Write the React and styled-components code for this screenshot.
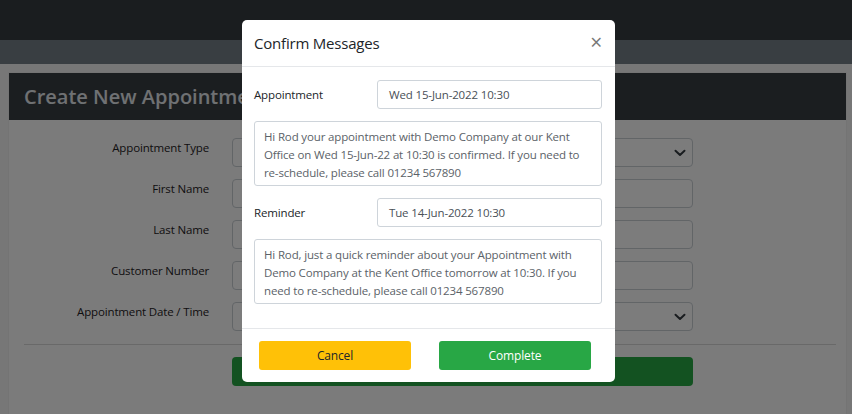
import React from 'react';
import styled, { createGlobalStyle } from 'styled-components';

const Global = createGlobalStyle`
	html, body {
		margin:0;
		padding:0;
		width:852px;
		height:414px;
		overflow:hidden;
		background:#f2f2f2;
		font-family:"Open Sans", "Noto Sans", sans-serif;
		font-size:11.5px;
		letter-spacing:-0.15px;
		color:#212529;
	}
	* { box-sizing:border-box; }
`;

const Page = styled.div`
	height:414px;
	display:flex;
	flex-flow:column nowrap;
`;

const Nav = styled.nav`
	height:40px;
	background:#363b41;
`;

const SubNav = styled.div`
	height:24px;
	background:#757e87;
`;

const Main = styled.main`
	flex:1;
	padding:8px 5px 0 8px;
	display:flex;
`;

const Card = styled.section`
	flex:1;
	background:#fbfbfb;
	border:1px solid #ececec;
	border-bottom:none;
	display:flex;
	flex-flow:column nowrap;
`;

const CardHeader = styled.header`
	height:47px;
	background:#383d42;
	padding:0 15px;
	display:flex;
	align-items:center;
`;

const CardTitle = styled.h2`
	margin:0;
	font-size:20px;
	font-weight:600;
	letter-spacing:0;
	color:#e2e6ea;
`;

const CardBody = styled.div`
	padding:18px 10px 0 15px;
	display:flex;
	flex-flow:column nowrap;
	gap:12px;
`;

const FormRow = styled.div`
	display:grid;
	grid-template-columns:185px 461px;
	column-gap:23px;
	align-items:start;
`;

const FormLabel = styled.label`
	text-align:right;
	color:#1f2225;
	line-height:16px;
	margin-top:2px;
`;

const Field = styled.div`
	height:29px;
	border:1px solid #c8ced3;
	border-radius:4px;
	background:#fdfdfd;
	display:flex;
	align-items:center;
	justify-content:flex-end;
	padding-right:4px;
`;

const Rule = styled.hr`
	margin:1px 0 0 0;
	border:none;
	border-top:1px solid #d6d6d6;
`;

const SubmitRow = styled.div`
	padding-left:208px;
`;

const Submit = styled.div`
	width:461px;
	height:29px;
	background:#28a745;
	border-radius:4px;
`;

const Backdrop = styled.div`
	position:fixed;
	inset:0;
	background:rgba(0,0,0,0.51);
`;

const Modal = styled.div`
	position:fixed;
	left:242px;
	top:20px;
	width:373px;
	height:362px;
	background:#fff;
	border-radius:5px;
	display:flex;
	flex-flow:column nowrap;
`;

const ModalHeader = styled.header`
	height:47px;
	border-bottom:1px solid #e5e7ea;
	padding:0 13px 0 12px;
	display:flex;
	align-items:center;
	justify-content:space-between;
`;

const ModalTitle = styled.h5`
	margin:0;
	font-size:15px;
	font-weight:400;
	letter-spacing:-0.2px;
	color:#212529;
`;

const Close = styled.span`
	font-size:21px;
	line-height:1;
	color:#777;
	margin-top:-2px;
`;

const ModalBody = styled.div`
	flex:1;
	padding:13px 13px 0 12px;
	display:flex;
	flex-flow:column nowrap;
`;

const PairRow = styled.div`
	display:grid;
	grid-template-columns:123px 1fr;
	align-items:center;
	margin-bottom:12px;
`;

const PairLabel = styled.span`
	color:#212529;
`;

const Input = styled.div`
	height:29px;
	border:1px solid #ced4da;
	border-radius:3px;
	padding:0 11px;
	display:flex;
	align-items:center;
	color:#495057;
`;

const Message = styled.div`
	height:65px;
	border:1px solid #ced4da;
	border-radius:3px;
	padding:6px 8px 0 9px;
	line-height:18px;
	color:#5b6268;
	margin-bottom:12px;
`;

const ModalFooter = styled.footer`
	height:54px;
	border-top:1px solid #e5e7ea;
	padding:12px 24px 0 17px;
	display:flex;
	justify-content:space-between;
	align-items:flex-start;
`;

const Btn = styled.button`
	width:152px;
	height:29px;
	border:none;
	border-radius:3px;
	font-family:inherit;
	font-size:12px;
	letter-spacing:-0.15px;
	background:${p => p.$bg};
	color:${p => p.$fg};
`;

const Chevron = () => (
	<svg width="16" height="8" viewBox="0 0 16 8">
		<path d="M3.5 1.8 L8 6 L12.5 1.8" fill="none" stroke="#343a40" strokeWidth="2" strokeLinecap="round" strokeLinejoin="round"/>
	</svg>
);

const fields = [
	{ label:'Appointment Type', select:true },
	{ label:'First Name' },
	{ label:'Last Name' },
	{ label:'Customer Number' },
	{ label:'Appointment Date / Time', select:true },
];

export default function App(){
	return(
		<>
			<Global/>
			<Page>
				<Nav/>
				<SubNav/>
				<Main>
					<Card>
						<CardHeader>
							<CardTitle>Create New Appointment</CardTitle>
						</CardHeader>
						<CardBody>
							{fields.map(f => (
								<FormRow key={f.label}>
									<FormLabel>{f.label}</FormLabel>
									<Field>{f.select && <Chevron/>}</Field>
								</FormRow>
							))}
							<Rule/>
							<SubmitRow>
								<Submit/>
							</SubmitRow>
						</CardBody>
					</Card>
				</Main>
			</Page>

			<Backdrop/>

			<Modal>
				<ModalHeader>
					<ModalTitle>Confirm Messages</ModalTitle>
					<Close>×</Close>
				</ModalHeader>
				<ModalBody>
					<PairRow>
						<PairLabel>Appointment</PairLabel>
						<Input>Wed 15-Jun-2022 10:30</Input>
					</PairRow>
					<Message>
						Hi Rod your appointment with Demo Company at our Kent Office on Wed 15-Jun-22 at 10:30 is confirmed. If you need to re-schedule, please call 01234 567890
					</Message>
					<PairRow>
						<PairLabel>Reminder</PairLabel>
						<Input>Tue 14-Jun-2022 10:30</Input>
					</PairRow>
					<Message>
						Hi Rod, just a quick reminder about your Appointment with Demo Company at the Kent Office tomorrow at 10:30. If you need to re-schedule, please call 01234 567890
					</Message>
				</ModalBody>
				<ModalFooter>
					<Btn $bg="#ffc107" $fg="#212529">Cancel</Btn>
					<Btn $bg="#28a745" $fg="#fff">Complete</Btn>
				</ModalFooter>
			</Modal>
		</>
	);
}
